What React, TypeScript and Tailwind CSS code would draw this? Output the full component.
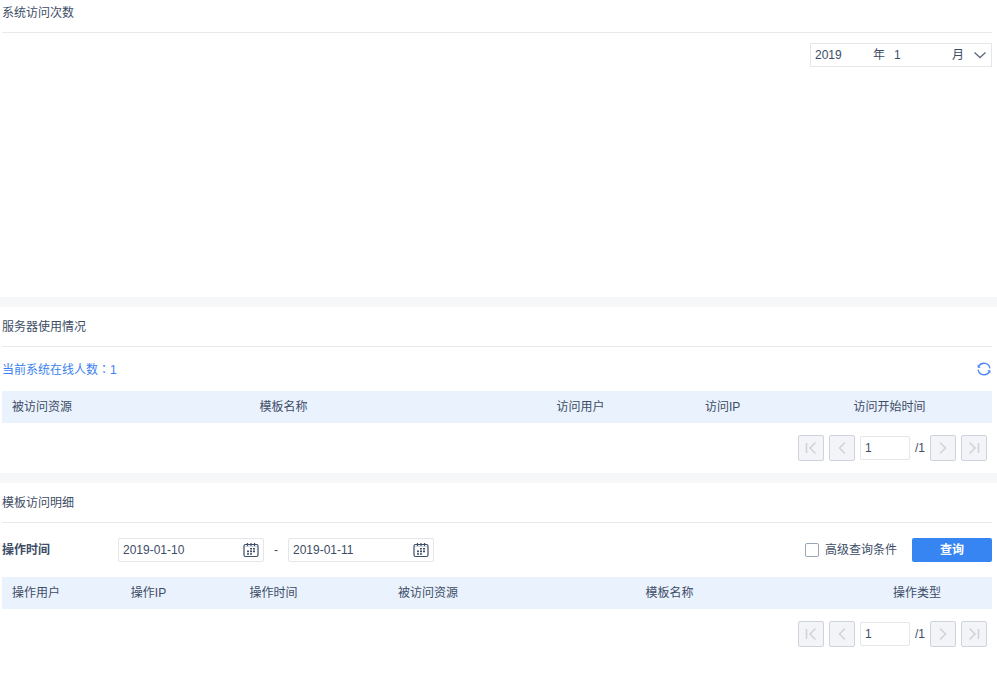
import React, { useState } from 'react';

interface Column {
  label: string;
  width: string;
}

const serverColumns: Column[] = [
  { label: '被访问资源', width: 'w-[25%]' },
  { label: '模板名称', width: 'w-[30%]' },
  { label: '访问用户', width: 'w-[15%]' },
  { label: '访问IP', width: 'w-[15%]' },
  { label: '访问开始时间', width: 'w-[15%]' },
];

const detailColumns: Column[] = [
  { label: '操作用户', width: 'w-[12%]' },
  { label: '操作IP', width: 'w-[12%]' },
  { label: '操作时间', width: 'w-[15%]' },
  { label: '被访问资源', width: 'w-[25%]' },
  { label: '模板名称', width: 'w-[25%]' },
  { label: '操作类型', width: 'w-[11%]' },
];

const CalendarIcon = () => (
  <svg width="16" height="16" viewBox="0 0 16 16" fill="none" stroke="#3d4d66">
    <rect x="1" y="2.5" width="14" height="12" rx="1.5" strokeWidth="1.2" />
    <path d="M2 4.5h12" strokeOpacity="0.25" />
    <path d="M4.5 1v3M8 1v3M11.5 1v3" strokeWidth="1.2" />
    <path
      d="M7 6h2v1.6H7zM10 6h2v1.6h-2zM4 8.6h2v1.6H4zM7 8.6h2v1.6H7zM10 8.6h2v1.6h-2zM4 11.2h2v1.6H4zM7 11.2h2v1.6H7z"
      fill="#3d4d66"
      stroke="none"
    />
  </svg>
);

const RefreshIcon = () => (
  <svg width="14" height="14" viewBox="0 0 14 14" fill="none" stroke="#4c86f5" strokeWidth="1.3">
    <path d="M1.8 4.2A6 6 0 0 1 12.9 6.4" />
    <path d="M12.2 9.8A6 6 0 0 1 1.1 7.6" />
    <path d="M.6 2.4v3.4h3.2zM13.4 11.6V8.2h-3.2z" fill="#4c86f5" stroke="none" />
  </svg>
);

const SectionTitle: React.FC<{ children: React.ReactNode }> = ({ children }) => (
  <h2 className="flex h-10 items-center border-b border-[#e8eaed]">{children}</h2>
);

const HeaderTable: React.FC<{ columns: Column[] }> = ({ columns }) => (
  <table className="w-full table-fixed">
    <thead>
      <tr className="h-8 bg-[#eaf2fe]">
        {columns.map(col => (
          <th key={col.label} className={`${col.width} px-2.5 text-left font-normal`}>
            {col.label}
          </th>
        ))}
      </tr>
    </thead>
  </table>
);

const PageButton: React.FC<{ label: string; path: string }> = ({ label, path }) => (
  <button
    type="button"
    aria-label={label}
    disabled
    className="flex size-[26px] items-center justify-center rounded-xs border border-[#cfd3db] bg-[#f3f4f7]"
  >
    <svg width="14" height="14" viewBox="0 0 14 14" fill="none" stroke="#d0d4da" strokeWidth="1.6">
      <path d={path} />
    </svg>
  </button>
);

const Pager = () => {
  const [page, setPage] = useState('1');

  return (
    <div className="flex items-center justify-end gap-[5px] px-[5px] py-3">
      <PageButton label="首页" path="M2.5 2v10M11.5 1.5L6 7l5.5 5.5" />
      <PageButton label="上一页" path="M10 1.5L4.5 7l5.5 5.5" />
      <input
        aria-label="页码"
        value={page}
        onChange={e => setPage(e.target.value)}
        className="h-6 w-[50px] rounded-xs border border-[#e4e6ea] px-1 outline-none"
      />
      <span>/1</span>
      <PageButton label="下一页" path="M4 1.5L9.5 7 4 12.5" />
      <PageButton label="末页" path="M11.5 2v10M2.5 1.5L8 7l-5.5 5.5" />
    </div>
  );
};

interface DateFieldProps {
  label: string;
  initial: string;
}

const DateField: React.FC<DateFieldProps> = ({ label, initial }) => {
  const [value, setValue] = useState(initial);

  return (
    <div className="flex h-6 w-[146px] items-center rounded-xs border border-[#e4e6ea] px-1">
      <input
        aria-label={label}
        value={value}
        onChange={e => setValue(e.target.value)}
        className="min-w-0 flex-1 outline-none"
      />
      <button type="button" aria-label={`选择${label}`}>
        <CalendarIcon />
      </button>
    </div>
  );
};

const MonthPicker = () => {
  const [year, setYear] = useState('2019');
  const [month, setMonth] = useState('1');

  return (
    <div className="flex h-6 w-[182px] items-center border border-[#e4e6ea] px-1">
      <input
        id="year"
        value={year}
        onChange={e => setYear(e.target.value)}
        className="w-[58px] outline-none"
      />
      <label htmlFor="year">年</label>
      <input
        id="month"
        value={month}
        onChange={e => setMonth(e.target.value)}
        className="ml-[9px] w-[58px] outline-none"
      />
      <label htmlFor="month">月</label>
      <button type="button" aria-label="选择月份" className="ml-auto">
        <svg width="14" height="14" viewBox="0 0 14 14" fill="none" stroke="#5f6b7e" strokeWidth="1.3">
          <path d="M1.5 4.5L7 9.5l5.5-5" />
        </svg>
      </button>
    </div>
  );
};

export default function App() {
  const [advanced, setAdvanced] = useState(false);

  return (
    <main className="bg-[#f6f7f9] font-['Liberation_Sans','Noto_Sans_CJK_SC',sans-serif] text-xs text-[#3d4d66]">
      <section className="min-h-[297px] bg-white pr-[5px] pl-0.5">
        <h2 className="flex h-[33px] items-center border-b border-[#e8eaed] pb-1.5">系统访问次数</h2>
        <div className="flex justify-end pt-2.5">
          <MonthPicker />
        </div>
      </section>

      <section className="mt-2.5 bg-white pr-[5px] pl-0.5">
        <SectionTitle>服务器使用情况</SectionTitle>
        <div className="flex h-11 items-center justify-between pr-px text-[#3b82f0]">
          <span>
            当前系统在线人数<span className="font-['Noto_Sans_CJK_TC',sans-serif]">：</span>1
          </span>
          <button type="button" aria-label="刷新">
            <RefreshIcon />
          </button>
        </div>
        <HeaderTable columns={serverColumns} />
        <Pager />
      </section>

      <section className="mt-2.5 min-h-[214px] bg-white pr-[5px] pl-0.5">
        <SectionTitle>模板访问明细</SectionTitle>
        <div className="flex h-[54px] items-center">
          <span className="w-[116px] font-bold">操作时间</span>
          <DateField label="开始日期" initial="2019-01-10" />
          <span className="w-6 text-center">-</span>
          <DateField label="结束日期" initial="2019-01-11" />
          <label className="ml-auto flex items-center gap-1.5">
            <input
              type="checkbox"
              checked={advanced}
              onChange={e => setAdvanced(e.target.checked)}
              className="size-3.5 appearance-none rounded-xs border border-[#9aa5b5] bg-white checked:bg-[#3685f2]"
            />
            高级查询条件
          </label>
          <button type="button" className="ml-[15px] h-6 w-20 rounded-xs bg-[#3685f2] font-bold text-white">
            查询
          </button>
        </div>
        <HeaderTable columns={detailColumns} />
        <Pager />
      </section>
    </main>
  );
}
